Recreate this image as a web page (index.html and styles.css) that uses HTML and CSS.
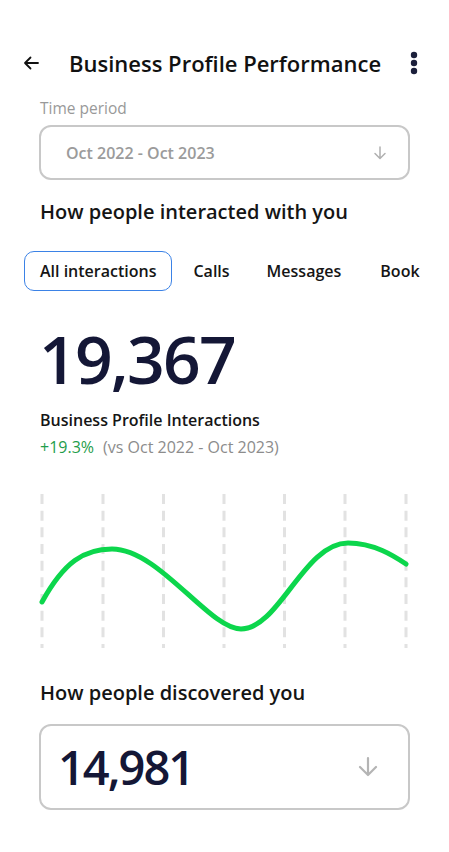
FILE: index.html
```html
<!DOCTYPE html>
<html lang="en">
<head>
<meta charset="utf-8">
<title>Business Profile Performance</title>
<link rel="stylesheet" href="styles.css">
</head>
<body>
<div class="screen">
  <header class="topbar">
    <span class="back" aria-label="Back">
      <svg width="16" height="14" viewBox="0 0 16 14"><path d="M15 7H2M7.5 1.5L2 7l5.5 5.5" fill="none" stroke="#111" stroke-width="1.8" stroke-linecap="round" stroke-linejoin="round"/></svg>
    </span>
    <h1 class="title">Business Profile Performance</h1>
    <span class="kebab" aria-label="More">
      <svg width="8" height="24" viewBox="0 0 8 24"><circle cx="4" cy="4" r="3.2" fill="#1b1f3b"/><circle cx="4" cy="12" r="3.2" fill="#1b1f3b"/><circle cx="4" cy="20" r="3.2" fill="#1b1f3b"/></svg>
    </span>
  </header>

  <main class="content">
    <div class="field-label">Time period</div>
    <div class="select">
      <span class="select-text">Oct 2022 - Oct 2023</span>
      <svg class="arrow-sm" width="16" height="16" viewBox="0 0 16 16"><path d="M8 2v11M3 8.5l5 5 5-5" fill="none" stroke="#b0b0b0" stroke-width="1.5" stroke-linecap="round" stroke-linejoin="round"/></svg>
    </div>

    <h2 class="section-title interacted">How people interacted with you</h2>
  </main>

  <nav class="tabs">
    <span class="tab active">All interactions</span>
    <span class="tab">Calls</span>
    <span class="tab">Messages</span>
    <span class="tab">Book</span>
  </nav>

  <section class="content stats">
    <div class="big-number">19,367</div>
    <div class="stat-label">Business Profile Interactions</div>
    <div class="stat-change"><span class="up">+19.3%</span><span class="vs">(vs Oct 2022 - Oct 2023)</span></div>

    <svg class="chart" width="371" height="162" viewBox="0 0 371 162">
      <g stroke="#e2e2e2" stroke-width="3" stroke-dasharray="10 6.67" fill="none">
        <line x1="3" y1="4" x2="3" y2="158"/>
        <line x1="64" y1="4" x2="64" y2="158"/>
        <line x1="124.5" y1="4" x2="124.5" y2="158"/>
        <line x1="185" y1="4" x2="185" y2="158"/>
        <line x1="245.5" y1="4" x2="245.5" y2="158"/>
        <line x1="306" y1="4" x2="306" y2="158"/>
        <line x1="367" y1="4" x2="367" y2="158"/>
      </g>
      <path d="M3,112 C25,72 45,59 73,59 C120,59 170,139 202,139 C240,139 265,53 309,53 C335,53 355,66 367,74" fill="none" stroke="#0cd64c" stroke-width="5" stroke-linecap="round"/>
    </svg>

    <h2 class="section-title discovered">How people discovered you</h2>
    <div class="select big">
      <span class="select-number">14,981</span>
      <svg class="arrow-lg" width="24" height="24" viewBox="0 0 24 24"><path d="M12 3v16M4 12l8 8 8-8" fill="none" stroke="#b4b4b4" stroke-width="2.2" stroke-linecap="round" stroke-linejoin="round"/></svg>
    </div>
  </section>
</div>
</body>
</html>
```

FILE: styles.css
```css
* { box-sizing: border-box; }
html, body { margin: 0; padding: 0; background: #fff; }
body {
  font-family: "Open Sans", "Noto Sans", Arial, sans-serif;
  color: #111;
  width: 449px;
  overflow: hidden;
}
.screen { width: 449px; }

.topbar {
  display: flex;
  align-items: center;
  height: 50px;
  margin-top: 38px;
  padding: 0 0 0 23px;
}
.back { display: flex; width: 16px; height: 14px; }
.title {
  margin: 0 0 0 30px;
  font-size: 22px;
  font-weight: 600;
  line-height: 28px;
  color: #111;
}
.kebab { display: flex; margin-left: auto; margin-right: 31px; }

.content { padding: 0 39px; }

.field-label {
  margin-top: 10px;
  font-size: 15.5px;
  line-height: 20px;
  color: #999;
  padding-left: 1px;
}
.select {
  display: flex;
  align-items: center;
  justify-content: space-between;
  height: 55px;
  margin-top: 7px;
  border: 2px solid #c8c8c8;
  border-radius: 12px;
  padding: 0 20px 0 25px;
}
.select-text {
  font-size: 16px;
  font-weight: 600;
  color: #9b9b9b;
}
.arrow-sm { display: block; }

.section-title {
  margin: 0;
  font-size: 20px;
  font-weight: 600;
  line-height: 26px;
  color: #151515;
  padding-left: 1px;
}
.interacted { margin-top: 19px; }

.tabs {
  display: flex;
  align-items: center;
  gap: 5px;
  margin-top: 26px;
  padding-left: 24px;
  white-space: nowrap;
  overflow: hidden;
}
.tab {
  display: flex;
  align-items: center;
  height: 40px;
  padding: 0 15px;
  border: 1.5px solid transparent;
  border-radius: 10px;
  font-size: 16px;
  font-weight: 600;
  color: #151515;
}
.tab:last-child { margin-left: 2px; }
.tab.active { border-color: #3b82e6; }

.stats { padding-top: 31px; }
.big-number {
  font-size: 66px;
  font-weight: 600;
  line-height: 72px;
  color: #141736;
  letter-spacing: -1.8px;
}
.stat-label {
  margin-top: 15px;
  font-size: 16px;
  font-weight: 600;
  line-height: 22px;
  color: #151515;
  padding-left: 1px;
}
.stat-change {
  margin-top: 5px;
  font-size: 16px;
  line-height: 22px;
  font-weight: 400;
  padding-left: 1px;
}
.up { color: #1f9d4b; margin-right: 9px; }
.vs { color: #8c8c8c; }

.chart { display: block; margin-top: 32px; }

.discovered { margin-top: 28px; }
.select.big {
  height: 86px;
  margin-top: 18px;
  padding: 0 28px 0 17px;
}
.select-number {
  font-size: 47px;
  font-weight: 600;
  color: #141736;
  letter-spacing: -2px;
}
.arrow-lg { display: block; }
```
